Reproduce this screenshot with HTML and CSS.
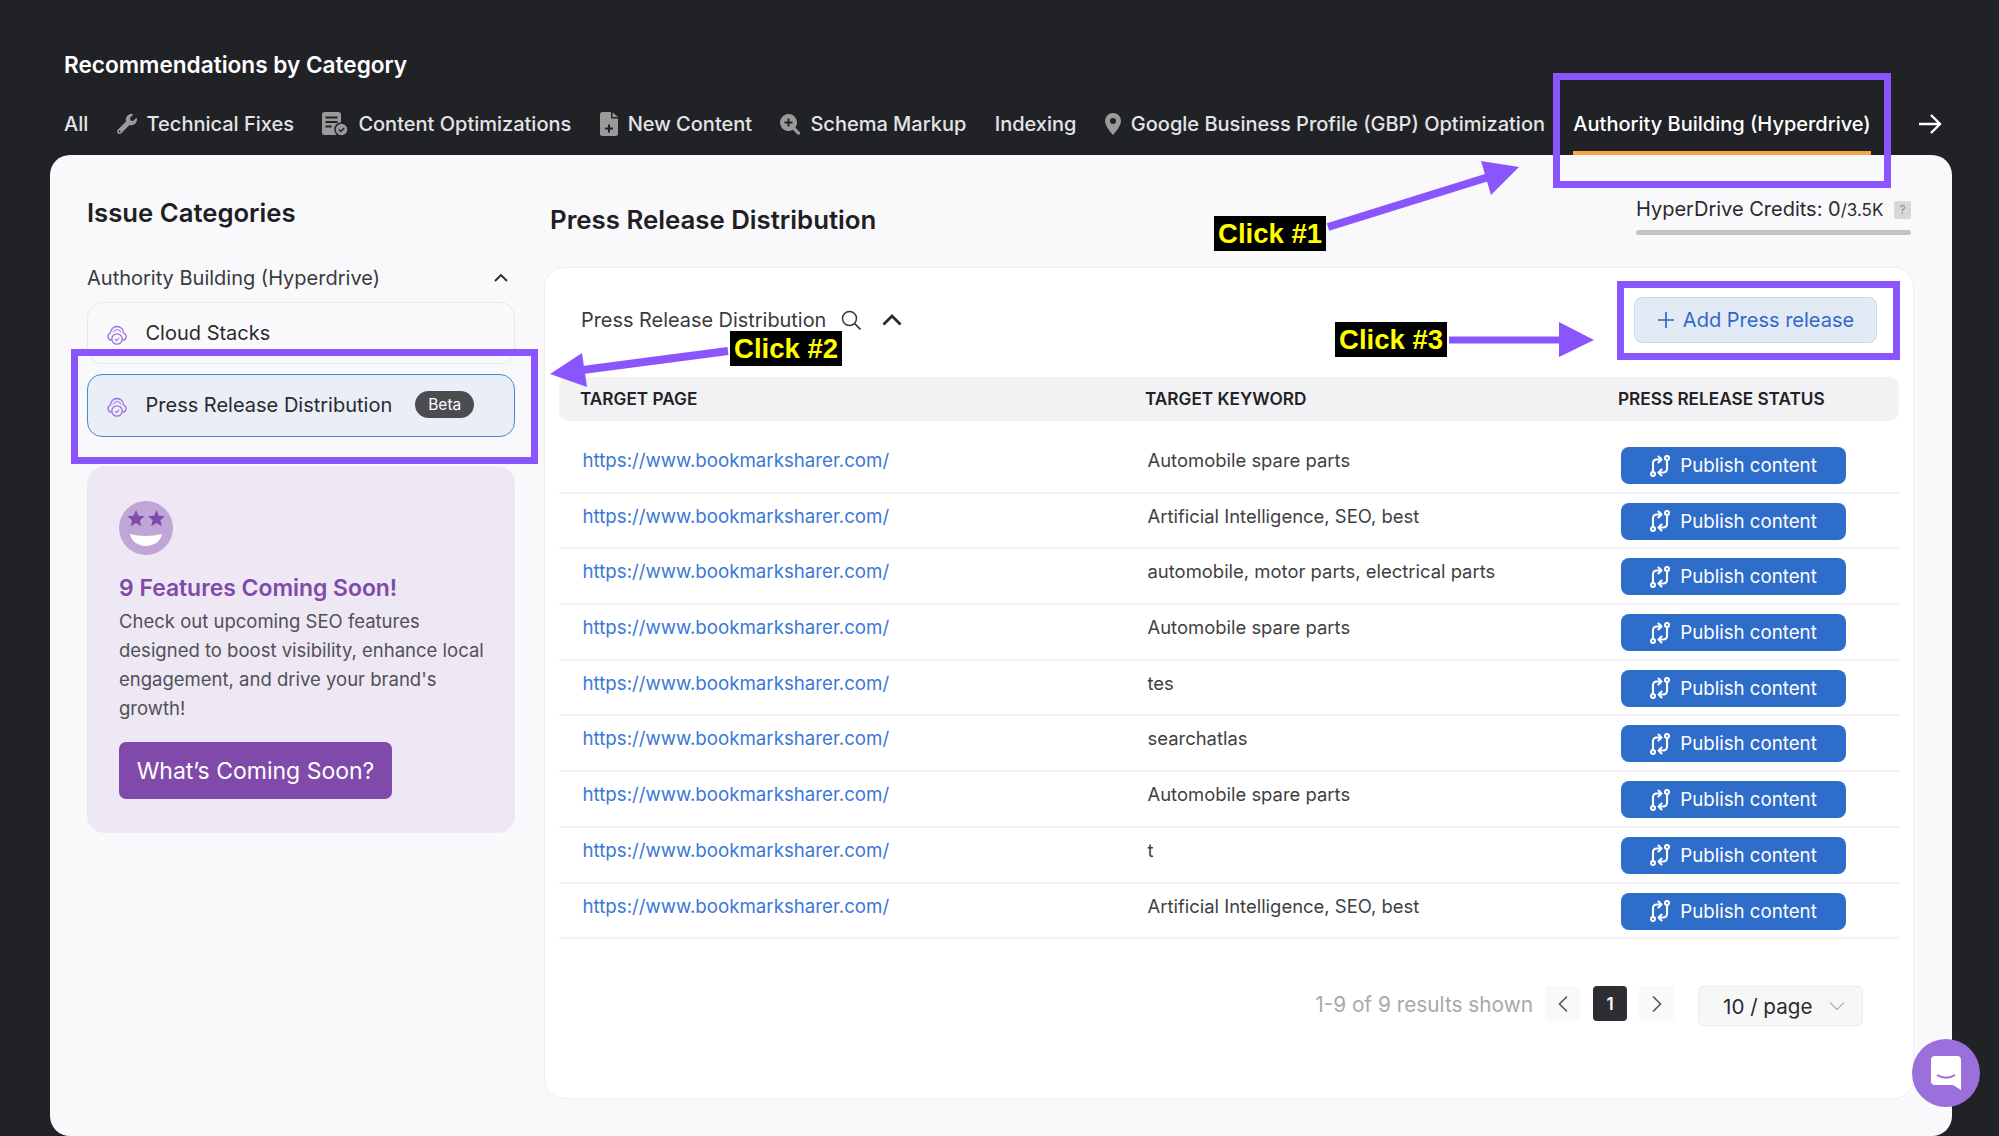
FILE: index.html
```html
<!DOCTYPE html>
<html lang="en">
<head>
  <meta charset="UTF-8">
  <title>Recommendations by Category</title>
  <link rel="stylesheet" href="styles.css">
</head>
<body>

  <svg class="defs" width="0" height="0">
    <symbol id="cloud" viewBox="0 0 20 20">
      <path d="M4.600 15.200A3.700 3.700 0 0 1 3.500 8 6.500 6.500 0 0 1 16.500 8a3.700 3.700 0 0 1-1.100 7.200" fill="none" stroke="currentColor" stroke-width="1.300"/>
      <path d="M6 7.500a4.200 4.200 0 0 1 8 0" fill="none" stroke="currentColor" stroke-width="1"/>
      <circle cx="10" cy="14" r="5.200" fill="none" stroke="currentColor" stroke-width="1.300"/>
      <path d="M8 14.200l1.500 1.400 2.500-2.700" fill="none" stroke="currentColor" stroke-width="1.100"/>
    </symbol>
    <symbol id="publish" viewBox="2 1 20 22">
      <g fill="none" stroke="currentColor" stroke-width="2.100" stroke-linecap="round" stroke-linejoin="round">
        <circle cx="19" cy="4" r="2"/>
        <circle cx="5" cy="20" r="2"/>
        <path d="M5 17.500V9a3.500 3.500 0 0 1 3.500-3.500H13"/>
        <path d="M10.500 2.500l3 3-3 3"/>
        <path d="M19 6.500V15a3.500 3.500 0 0 1-3.500 3.500H11"/>
        <path d="M13.500 15.500l-3 3 3 3"/>
      </g>
    </symbol>
  </svg>

  <!-- Top bar -->
  <header class="top">
    <h1>Recommendations by Category</h1>
    <nav class="tabs">
      <a class="tab">All</a>
      <a class="tab">
        <svg class="tab-icon" width="20" height="20" viewBox="0 0 512 512"><path d="M507.73 109.1c-2.24-9.03-13.54-12.09-20.12-5.51l-74.36 74.36-67.88-11.31-11.31-67.88 74.36-74.36c6.62-6.62 3.43-17.9-5.66-20.16-47.38-11.74-99.55.91-136.58 37.93-39.64 39.64-50.55 97.1-34.05 147.2L18.74 402.76c-24.99 24.99-24.99 65.51 0 90.5 24.99 24.99 65.51 24.99 90.5 0l213.21-213.21c50.12 16.71 107.47 5.68 147.37-34.22 37.07-37.07 49.7-89.32 37.91-136.73zM64 472c-13.25 0-24-10.75-24-24 0-13.26 10.75-24 24-24s24 10.74 24 24c0 13.25-10.75 24-24 24z"/></svg>
        Technical Fixes
      </a>
      <a class="tab">
        <svg class="tab-icon" width="26" height="24" viewBox="0 0 26 24">
          <rect x="0" y="0" width="19" height="23" rx="2.500"/>
          <path d="M3.500 5.500h12M3.500 10h12M3.500 14.500h6" stroke="#212226" stroke-width="2"/>
          <circle cx="19.500" cy="17.500" r="6.500" stroke="#212226" stroke-width="1.500"/>
          <path d="M16.800 17.500l2 2 3.400-3.600" fill="none" stroke="#212226" stroke-width="1.500"/>
        </svg>
        Content Optimizations
      </a>
      <a class="tab">
        <svg class="tab-icon" width="18" height="24" viewBox="0 0 18 24"><path fill-rule="evenodd" d="M2.500 0H11v6.500h7V21.500a2.500 2.500 0 0 1-2.500 2.500h-13A2.500 2.500 0 0 1 0 21.500v-19A2.500 2.500 0 0 1 2.500 0zM8 12.500v3H5v2h3v3h2v-3h3v-2h-3v-3zM12.500 0.500L18 5h-5.500z"/></svg>
        New Content
      </a>
      <a class="tab">
        <svg class="tab-icon" width="20" height="21" viewBox="0 0 20 21"><path fill-rule="evenodd" d="M8.500 0a8.500 8.500 0 0 1 6.800 13.600l4.300 4.300a1.600 1.600 0 0 1-2.300 2.300l-4.400-4.400A8.500 8.500 0 1 1 8.500 0zM7.500 4.500v3h-3v2h3v3h2v-3h3v-2h-3v-3z"/></svg>
        Schema Markup
      </a>
      <a class="tab">Indexing</a>
      <a class="tab">
        <svg class="tab-icon" width="16" height="22" viewBox="0 0 16 22"><path fill-rule="evenodd" d="M8 0a8 8 0 0 1 8 8c0 4.800-5.500 11-8 14-2.500-3-8-9.200-8-14a8 8 0 0 1 8-8zm0 5a3 3 0 1 0 0 6 3 3 0 0 0 0-6z"/></svg>
        Google Business Profile (GBP) Optimization
      </a>
      <a class="tab tab-active">Authority Building (Hyperdrive)</a>
      <svg class="tabs-next" width="24" height="24" viewBox="0 0 24 24"><path d="M1 12h21M13 3l9 9-9 9" fill="none" stroke="#fff" stroke-width="2.400"/></svg>
    </nav>
  </header>

  <!-- Main panel -->
  <div class="panel">
    <aside class="sidebar">
      <h2>Issue Categories</h2>
      <div class="section-head">
        <span>Authority Building (Hyperdrive)</span>
        <svg width="16" height="10" viewBox="0 0 16 10"><path d="M2 8l6-6 6 6" fill="none" stroke="#2a2a2e" stroke-width="1.800"/></svg>
      </div>
      <div class="side-item">
        <svg class="side-icon"><use href="#cloud"/></svg>
        Cloud Stacks
      </div>
      <div class="side-item side-item-active">
        <svg class="side-icon"><use href="#cloud"/></svg>
        Press Release Distribution
        <span class="beta">Beta</span>
      </div>

      <div class="promo">
        <svg class="promo-face" width="54" height="54" viewBox="0 0 54 54">
          <circle cx="27" cy="27" r="27" fill="#c0a5d6"/>
          <path d="M17 9l2.400 5.700 6.100.5-4.600 4 1.400 6-5.300-3.200-5.300 3.200 1.400-6-4.600-4 6.100-.5z" fill="#7f4aa9"/>
          <path d="M37.500 9l2.400 5.700 6.100.5-4.600 4 1.400 6-5.300-3.200-5.300 3.200 1.400-6-4.600-4 6.100-.5z" fill="#7f4aa9"/>
          <path d="M11 33c10 2.500 22 2.500 32 0-1 7-8 12-16 12s-15-5-16-12z" fill="#fff"/>
        </svg>
        <h3>9 Features Coming Soon!</h3>
        <p>Check out upcoming SEO features designed to boost visibility, enhance local engagement, and drive your brand's growth!</p>
        <button class="promo-btn">What’s Coming Soon?</button>
      </div>
    </aside>

    <main class="main">
      <div class="main-head">
        <h2 class="main-title">Press Release Distribution</h2>
        <div class="credits">
          <div class="credits-text">
            <span>HyperDrive Credits: 0<small>/3.5K</small></span>
            <span class="help">?</span>
          </div>
          <div class="credits-bar"></div>
        </div>
      </div>

      <section class="card">
        <div class="toolbar">
          <span class="toolbar-title">Press Release Distribution</span>
          <svg class="toolbar-search" width="20" height="20" viewBox="0 0 20 20"><circle cx="8.500" cy="8.500" r="7" fill="none" stroke="#333" stroke-width="1.500"/><path d="M13.500 13.500l6 6" stroke="#333" stroke-width="1.600"/></svg>
          <svg class="toolbar-chevron" width="20" height="12" viewBox="0 0 20 12"><path d="M1.500 10.500L10 2l8.500 8.500" fill="none" stroke="#2a2a2e" stroke-width="2.800"/></svg>
          <button class="add-btn">
            <svg width="18" height="18" viewBox="0 0 18 18"><path d="M9 1v16M1 9h16" stroke="currentColor" stroke-width="1.700"/></svg>
            Add Press release
          </button>
        </div>

        <div class="table-head">
          <div>TARGET PAGE</div>
          <div>TARGET KEYWORD</div>
          <div>PRESS RELEASE STATUS</div>
        </div>

        <div class="rows">
          <div class="row"><a class="link">https://www.bookmarksharer.com/</a><div>Automobile spare parts</div><button class="pub-btn"><svg class="pub-icon"><use href="#publish"/></svg>Publish content</button></div>
          <div class="row"><a class="link">https://www.bookmarksharer.com/</a><div>Artificial Intelligence, SEO, best</div><button class="pub-btn"><svg class="pub-icon"><use href="#publish"/></svg>Publish content</button></div>
          <div class="row"><a class="link">https://www.bookmarksharer.com/</a><div>automobile, motor parts, electrical parts</div><button class="pub-btn"><svg class="pub-icon"><use href="#publish"/></svg>Publish content</button></div>
          <div class="row"><a class="link">https://www.bookmarksharer.com/</a><div>Automobile spare parts</div><button class="pub-btn"><svg class="pub-icon"><use href="#publish"/></svg>Publish content</button></div>
          <div class="row"><a class="link">https://www.bookmarksharer.com/</a><div>tes</div><button class="pub-btn"><svg class="pub-icon"><use href="#publish"/></svg>Publish content</button></div>
          <div class="row"><a class="link">https://www.bookmarksharer.com/</a><div>searchatlas</div><button class="pub-btn"><svg class="pub-icon"><use href="#publish"/></svg>Publish content</button></div>
          <div class="row"><a class="link">https://www.bookmarksharer.com/</a><div>Automobile spare parts</div><button class="pub-btn"><svg class="pub-icon"><use href="#publish"/></svg>Publish content</button></div>
          <div class="row"><a class="link">https://www.bookmarksharer.com/</a><div>t</div><button class="pub-btn"><svg class="pub-icon"><use href="#publish"/></svg>Publish content</button></div>
          <div class="row"><a class="link">https://www.bookmarksharer.com/</a><div>Artificial Intelligence, SEO, best</div><button class="pub-btn"><svg class="pub-icon"><use href="#publish"/></svg>Publish content</button></div>
        </div>

        <div class="pager">
          <span class="pager-info">1-9 of 9 results shown</span>
          <span class="pager-btn"><svg width="12" height="18" viewBox="0 0 12 18"><path d="M10 1.500L2.500 9l7.500 7.500" fill="none" stroke="#555" stroke-width="1.600"/></svg></span>
          <span class="pager-btn pager-current">1</span>
          <span class="pager-btn"><svg width="12" height="18" viewBox="0 0 12 18"><path d="M2 1.500L9.500 9 2 16.500" fill="none" stroke="#555" stroke-width="1.600"/></svg></span>
          <span class="page-size">10 / page
            <svg width="16" height="10" viewBox="0 0 16 10"><path d="M1 1.500l7 7 7-7" fill="none" stroke="#b5b5b8" stroke-width="1.300"/></svg>
          </span>
        </div>
      </section>
    </main>
  </div>

  <!-- Chat launcher -->
  <div class="chat">
    <svg width="30" height="34" viewBox="0 0 30 34"><path d="M4 0h22a4 4 0 0 1 4 4v30l-8-5H4a4 4 0 0 1-4-4V4a4 4 0 0 1 4-4z" fill="#fff"/><path d="M6 19c5 3.500 13 3.500 18 0" fill="none" stroke="#9b6fdc" stroke-width="2"/></svg>
  </div>

  <!-- Tutorial annotations -->
  <div class="mark mark-tab"></div>
  <div class="mark mark-item"></div>
  <div class="mark mark-add"></div>
  <div class="click click-1">Click #1</div>
  <div class="click click-2">Click #2</div>
  <div class="click click-3">Click #3</div>
  <svg class="arrows" width="1999" height="1136" viewBox="0 0 1999 1136">
    <path d="M1328 227L1495 175" stroke="#8a55fd" stroke-width="8"/>
    <path d="M1519 167L1481 161L1491 195z" fill="#8a55fd"/>
    <path d="M728 351L575 371" stroke="#8a55fd" stroke-width="8"/>
    <path d="M550 374L582 353L587 387z" fill="#8a55fd"/>
    <path d="M1449 340H1565" stroke="#8a55fd" stroke-width="7"/>
    <path d="M1594 340L1559 322V357z" fill="#8a55fd"/>
  </svg>

</body>
</html>
```

FILE: styles.css
```css
* {
  box-sizing: border-box;
}
html, body {
  height: 100%;
}
body {
  margin: 0;
  display: flex;
  flex-direction: column;
  position: relative;
  overflow: hidden;
  background: #212226;
  font-family: Inter, "Noto Sans", sans-serif;
  color: #2a2a2e;
}
.defs {
  position: absolute;
}
h1, h2, h3, p {
  margin: 0;
}

/* top bar */
.top {
  padding: 50px 57px 0 64px;
}
h1 {
  font-size: 22.6px;
  font-weight: 600;
  line-height: 30px;
  color: #fff;
}
.tabs {
  display: flex;
  align-items: flex-start;
  gap: 28.35px;
  margin-top: 28px;
}
.tab {
  display: flex;
  align-items: center;
  gap: 10px;
  height: 47px;
  padding-bottom: 11px;
  border-bottom: 4px solid transparent;
  font-size: 20px;
  font-weight: 500;
  line-height: 32px;
  color: #e4e4e8;
  white-space: nowrap;
}
.tab-icon {
  fill: #9a9a9a;
  flex: none;
}
.tab-active {
  color: #fff;
  border-bottom-color: #f4a742;
}
.tabs-next {
  margin: 4px 0 0 auto;
}

/* panel */
.panel {
  flex: 1;
  display: flex;
  gap: 29px;
  margin: 0 47px 0 50px;
  padding: 0 38px 0 37px;
  background: #f9f9fb;
  border-radius: 20px;
}
.sidebar {
  width: 428px;
  flex: none;
  padding-top: 42px;
}
.sidebar h2 {
  font-size: 25.7px;
  font-weight: 600;
  line-height: 32px;
  color: #202024;
}
.section-head {
  display: flex;
  justify-content: space-between;
  align-items: center;
  margin: 36px 0 11px;
  padding-right: 6px;
  font-size: 20px;
  line-height: 26px;
  color: #3a3a3f;
}
.side-item {
  display: flex;
  align-items: center;
  height: 62px;
  margin-bottom: 10px;
  padding-left: 19px;
  background: #fafafc;
  border: 1px solid #e8e8ec;
  border-radius: 15px;
  font-size: 20px;
  color: #2a2a2e;
}
.side-item-active {
  height: 63px;
  padding-bottom: 2px;
  background: #e9eef7;
  border: 1.5px solid #4a86d8;
}
.side-icon {
  width: 20px;
  height: 20px;
  margin-right: 18.5px;
  margin-top: 4px;
  color: #9a6ee0;
  flex: none;
}
.beta {
  margin-left: 23px;
  padding: 0 13px;
  background: #4b4c50;
  border-radius: 14px;
  font-size: 15.5px;
  line-height: 27px;
  color: #fff;
}

/* promo */
.promo {
  margin-top: 29px;
  height: 367px;
  padding: 35px 20px 35px 32px;
  background: #eee7f4;
  border-radius: 18px;
}
.promo-face {
  display: block;
}
.promo h3 {
  margin-top: 18px;
  font-size: 22.9px;
  font-weight: 600;
  line-height: 30px;
  color: #7f4aa9;
}
.promo p {
  margin-top: 4px;
  font-size: 18.5px;
  line-height: 29px;
  color: #505157;
}
.promo-btn {
  display: block;
  margin-top: 19px;
  width: 273px;
  height: 57px;
  padding: 0;
  border: none;
  border-radius: 7px;
  background: #7f4aa9;
  font-family: inherit;
  font-size: 23px;
  color: #fff;
}

/* main column */
.main {
  flex: 1;
  min-width: 0;
  padding-top: 40px;
}
.main-head {
  display: flex;
  justify-content: space-between;
  height: 72px;
  padding: 0 3px 0 6px;
}
.main-title {
  margin-top: 9px;
  font-size: 25.8px;
  font-weight: 600;
  line-height: 32px;
  color: #202024;
}
.credits {
  width: 275px;
}
.credits-text {
  display: flex;
  justify-content: space-between;
  align-items: center;
  margin-top: 1px;
  font-size: 20px;
  line-height: 26px;
  color: #2a2a2e;
}
.credits-text small {
  font-size: 17px;
}
.help {
  width: 17px;
  height: 18px;
  background: #d8d8da;
  border-radius: 2px;
  font-size: 12px;
  line-height: 18px;
  text-align: center;
  color: #909094;
}
.credits-bar {
  height: 5px;
  margin-top: 7px;
  background: #c4c4c6;
  border-radius: 3px;
}
.card {
  height: 832px;
  padding: 29px 14px 0;
  background: #fff;
  border: 1px solid #eeeff2;
  border-radius: 20px;
}
.toolbar {
  display: flex;
  align-items: center;
  height: 46px;
  margin-bottom: 34px;
  padding: 0 22px 0 22px;
}
.toolbar-title {
  font-size: 19.9px;
  color: #3a3a3f;
}
.toolbar-search {
  margin-left: 15px;
}
.toolbar-chevron {
  margin-left: 21px;
}
.add-btn {
  display: flex;
  align-items: center;
  justify-content: center;
  gap: 8px;
  width: 243px;
  height: 46px;
  margin-left: auto;
  background: #e2eaf6;
  border: 1px solid #c7d8ef;
  border-radius: 8px;
  font-family: inherit;
  font-size: 20px;
  color: #3068c8;
}
.table-head, .row {
  display: grid;
  grid-template-columns: 565px 473px 1fr;
}
.table-head {
  height: 44px;
  align-items: center;
  padding: 0 0 2px 21px;
  background: #f2f2f4;
  border-radius: 10px;
  font-size: 17.2px;
  font-weight: 600;
  color: #222226;
}
.rows {
  margin-top: 17px;
}
.row {
  height: 55.7px;
  padding: 9px 0 0 23.5px;
  border-bottom: 2px solid #f3f3f5;
  font-size: 18.45px;
  line-height: 27.5px;
  color: #3f3f44;
}
.link {
  font-size: 18.7px;
  color: #3a78d8;
}
.pub-btn {
  display: flex;
  align-items: center;
  justify-content: center;
  gap: 10px;
  width: 225px;
  height: 37px;
  margin-left: 0.5px;
  background: #2f6dcb;
  border: none;
  border-radius: 8px;
  font-family: inherit;
  font-size: 18.7px;
  color: #fff;
}
.pub-icon {
  width: 20px;
  height: 22px;
  flex: none;
}

/* pagination */
.pager {
  display: flex;
  justify-content: flex-end;
  align-items: flex-start;
  margin-top: 47px;
  padding-right: 36px;
}
.pager-info {
  margin-right: 12px;
  font-size: 20.8px;
  line-height: 38px;
  color: #a8a8ac;
}
.pager-btn {
  display: flex;
  align-items: center;
  justify-content: center;
  width: 35px;
  height: 35px;
  margin-right: 13px;
  background: #f9f9f9;
  border-radius: 4px;
}
.pager-current {
  width: 34px;
  margin-right: 12px;
  background: #2d2e33;
  color: #fff;
  font-size: 17px;
  font-weight: 600;
}
.page-size {
  display: flex;
  align-items: center;
  justify-content: space-between;
  width: 165px;
  height: 40px;
  margin-left: 11px;
  padding: 0 17px 0 24px;
  background: #f7f7f8;
  border: 1px solid #ececee;
  border-radius: 5px;
  font-size: 20.6px;
  color: #2a2a2e;
}

/* chat launcher */
.chat {
  position: absolute;
  left: 1912px;
  top: 1039px;
  display: flex;
  align-items: center;
  justify-content: center;
  width: 68px;
  height: 68px;
  background: #9b6fdc;
  border-radius: 50%;
}

/* annotations over the screenshot */
.mark {
  position: absolute;
  border: 7px solid #8a55fd;
}
.mark-tab {
  left: 1553px;
  top: 73px;
  width: 338px;
  height: 115px;
}
.mark-item {
  left: 71px;
  top: 349px;
  width: 467px;
  height: 115px;
}
.mark-add {
  left: 1617px;
  top: 281px;
  width: 283px;
  height: 79px;
}
.click {
  position: absolute;
  width: 112px;
  height: 35px;
  background: #000;
  font-family: "Liberation Sans", Arial, sans-serif;
  font-size: 27.5px;
  font-weight: 700;
  line-height: 36px;
  text-align: center;
  color: #ffff00;
}
.click-1 {
  left: 1214px;
  top: 216px;
}
.click-2 {
  left: 730px;
  top: 331px;
}
.click-3 {
  left: 1335px;
  top: 322px;
}
.arrows {
  position: absolute;
  left: 0;
  top: 0;
  pointer-events: none;
}
```
